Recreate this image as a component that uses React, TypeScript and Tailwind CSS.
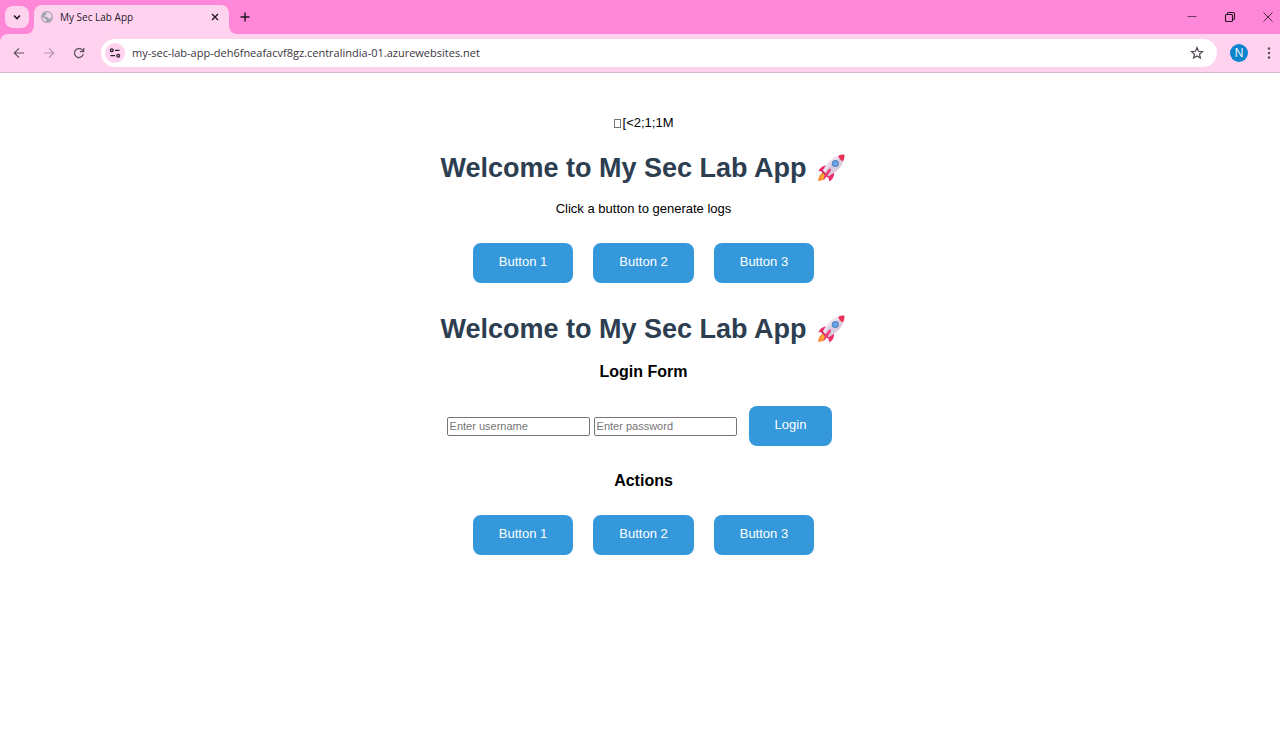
import React from "react";

function Rocket() {
  return (
    <svg role="img" aria-label="rocket" viewBox="0 0 32 32" className="h-8 w-8">
      <path d="M8 20.5c-2.4 1-4 3.5-5.2 8.500 4.500-.5 7.200-1.900 8.300-4.600z" fill="#f98a2f" />
      <path d="M8.600 22c-1.700 1-2.500 2.500-3 4.700 2.100-.2 3.600-.9 4.600-2.500z" fill="#ffb02e" />
      <path d="M12.500 13.500c-3.500-.3-6.900 1.300-9.200 5.400l5.800.5zM19 20.300c.4 3.500-.8 6.800-4.600 9.300l-1.700-6.100z" fill="#ec2d6c" />
      <path d="M24.500 3.600c-6.700 1-12.200 7.300-16.700 15.200l5.500 5.700c7.600-4.300 14-9.400 15.300-16.500z" fill="#dccbdc" />
      <path d="M24.500 3.600c-6.700 1-12.200 7.300-16.700 15.200l1.800 1.900c5-8 9.500-13.500 16.800-15.100z" fill="#ece2ef" />
      <path d="M23.200 3.900c2.400-1.200 4.700-1.500 6.200-1.200.3 1.600-.2 4.200-1.300 6.500-1.800-.4-4.200-2.700-4.900-5.300z" fill="#e93356" />
      <path d="M7.200 18.100l6.200 6.100-1 1.300-6.300-6.200z" fill="#c51b5c" />
      <path d="M14.800 16.300l1.400 1.400c-1.800 3.200-4.200 6.700-7.700 10.900.1-4.500 2.300-8.500 6.300-12.300z" fill="#ee3b78" />
      <circle cx="20.300" cy="11.600" r="3.500" fill="#4c88c9" />
      <circle cx="20.300" cy="11.600" r="2.300" fill="#70a6e2" />
    </svg>
  );
}

function Globe() {
  return (
    <svg viewBox="0 0 16 16" className="h-3 w-3 shrink-0" aria-hidden="true">
      <circle cx="8" cy="8" r="8" fill="#a3a3aa" />
      <path d="M8.500 1.500c-2.500.4-2.700 1.700-1.500 2.500 1.400.8-.4 1.700-1.700 1.700-.8.700-1.300 1.300-.4 1.900 1.600.3 2.900-.1 4 .8.900.9 1.100 2 2.500 2 1.500 0 2.200-1.300 3-2.400.2-3.400-2.300-6.300-5.900-6.500zM1.500 8c.8 1 2.600.9 3.200 1.900.8 1 2.400.4 2.600 1.600.1 1-.9 1.300-.8 2.800C3.600 13.700 1.400 11.200 1.500 8z" fill="#f0d5ea" />
    </svg>
  );
}

const iconButton = "flex h-6 w-6 shrink-0 items-center justify-center";

function TabStrip() {
  return (
    <div className="flex h-[34px] items-end bg-[#ff87d8]">
      <div className="flex h-[34px] w-[34px] shrink-0 items-center pl-[5px]">
        <button aria-label="Search tabs" className="flex h-[22px] w-6 items-center justify-center rounded-lg bg-[#ffd3f0]">
          <svg viewBox="0 0 12 12" className="h-3 w-3" fill="none" stroke="#201620" strokeWidth="1.6">
            <path d="M3 4.5 6 7.5 9 4.5" />
          </svg>
        </button>
      </div>
      <div className="relative flex h-[29px] w-[195px] items-center rounded-t-lg bg-[#ffd3f0] pb-1.5 pl-[7px] pr-2">
        <svg viewBox="0 0 8 8" className="absolute -left-2 bottom-0 h-2 w-2" aria-hidden="true">
          <path d="M8 0v8H0a8 8 0 0 0 8-8z" fill="#ffd3f0" />
        </svg>
        <svg viewBox="0 0 8 8" className="absolute -right-2 bottom-0 h-2 w-2" aria-hidden="true">
          <path d="M0 0v8h8a8 8 0 0 1-8-8z" fill="#ffd3f0" />
        </svg>
        <Globe />
        <span className="ml-[7px] flex-1 font-['Open_Sans',sans-serif] text-[10px] leading-4 text-[#25181f]">My Sec Lab App</span>
        <button aria-label="Close tab" className="flex h-3 w-3 items-center justify-center">
          <svg viewBox="0 0 12 12" className="h-3 w-3" stroke="#201620" strokeWidth="1.4">
            <path d="M3 3l6 6M9 3 3 9" />
          </svg>
        </button>
      </div>
      <button aria-label="New tab" className="ml-1 flex h-[34px] w-6 items-center justify-center">
        <svg viewBox="0 0 12 12" className="h-3 w-3" stroke="#201620" strokeWidth="1.4">
          <path d="M6 1.5v9M1.5 6h9" />
        </svg>
      </button>
      <div className="ml-auto flex h-[34px] items-center gap-[26px] pr-1.5">
        <button aria-label="Minimize" className="flex h-3 w-3 items-center justify-center">
          <svg viewBox="0 0 12 12" className="h-3 w-3" stroke="#6d3c5e" strokeWidth="1">
            <path d="M1.5 5.5h9" />
          </svg>
        </button>
        <button aria-label="Restore" className="flex h-3 w-3 items-center justify-center">
          <svg viewBox="0 0 12 12" className="h-3 w-3" fill="none" stroke="#2b1524" strokeWidth="1.1">
            <rect x="1.5" y="3.5" width="7" height="7" rx="1" />
            <path d="M3.5 3.500V2.600c0-.6.400-1.100 1-1.100h4.500c.8 0 1.500.6 1.500 1.500v4.500c0 .5-.4.900-1 .9h-.8" />
          </svg>
        </button>
        <button aria-label="Close window" className="flex h-3 w-3 items-center justify-center">
          <svg viewBox="0 0 12 12" className="h-3 w-3" stroke="#4d2a42" strokeWidth="1">
            <path d="M1.5 1.5l9 9M10.5 1.5l-9 9" />
          </svg>
        </button>
      </div>
    </div>
  );
}

function Toolbar() {
  return (
    <div className="bg-[#ff87d8]">
      <div className="flex h-[39px] items-center rounded-tl-lg border-b border-[#d3b9cf] bg-[#ffd3f0] pl-[7px]">
        <div className="flex gap-1.5">
          <button aria-label="Back" className={iconButton}>
            <svg viewBox="0 0 12 12" className="h-3 w-3" fill="none" stroke="#5d5060" strokeWidth="1.2">
              <path d="M11 6H1.5M6 1.3 1.3 6 6 10.7" />
            </svg>
          </button>
          <button aria-label="Forward" className={iconButton}>
            <svg viewBox="0 0 12 12" className="h-3 w-3" fill="none" stroke="#b494ad" strokeWidth="1.2">
              <path d="M1 6h9.5M6 1.3 10.7 6 6 10.7" />
            </svg>
          </button>
          <button aria-label="Reload" className={iconButton}>
            <svg viewBox="0 0 12 12" className="h-3 w-3" fill="none" stroke="#5d5060" strokeWidth="1.3">
              <path d="M10.3 7.2A4.500 4.500 0 1 1 9.200 2.900L10.600 4.400M10.700.9v3.700H7" />
            </svg>
          </button>
        </div>
        <div className="ml-2.5 flex h-7 flex-1 items-center rounded-full bg-white pl-1 pr-2">
          <button aria-label="View site information" className="flex h-5 w-5 shrink-0 items-center justify-center rounded-full bg-[#ffd3f0]">
            <svg viewBox="0 0 12 12" className="h-3 w-3" fill="none" stroke="#2a2029" strokeWidth="1.3">
              <circle cx="2.8" cy="3.3" r="1.4" />
              <path d="M6 3.3h4.500M1.500 8.700h4.500" />
              <circle cx="9.2" cy="8.7" r="1.4" />
            </svg>
          </button>
          <input
            aria-label="Address"
            defaultValue="my-sec-lab-app-deh6fneafacvf8gz.centralindia-01.azurewebsites.net"
            className="ml-[7px] min-w-0 flex-1 bg-transparent font-['Open_Sans',sans-serif] text-[11px] leading-5 text-[#3b3640] outline-none"
          />
          <button aria-label="Bookmark this page" className={iconButton}>
            <svg viewBox="0 0 14 14" className="h-3.5 w-3.5" fill="none" stroke="#4f4652" strokeWidth="1.2">
              <path d="M7 1.600 8.500 5.300l4 .3-3 2.600.9 3.900L7 10l-3.400 2.100.9-3.900-3-2.600 4-.3z" />
            </svg>
          </button>
        </div>
        <button
          aria-label="Profile"
          className="ml-[13px] flex h-[18px] w-[18px] items-center justify-center rounded-full bg-[#0d84cc] font-['Open_Sans',sans-serif] text-[12px] leading-4 text-white"
        >
          N
        </button>
        <button aria-label="Menu" className="ml-2.5 flex h-6 w-[22px] items-center justify-center">
          <svg viewBox="0 0 12 12" className="h-3 w-3" fill="#574b59">
            <circle cx="6" cy="1.5" r="1.2" />
            <circle cx="6" cy="6" r="1.2" />
            <circle cx="6" cy="10.5" r="1.2" />
          </svg>
        </button>
      </div>
    </div>
  );
}

function ActionButton({ children }: { children: React.ReactNode }) {
  return (
    <button className="h-10 rounded-lg bg-[#3498db] px-[26px] pb-0.5 text-[13px] leading-5 text-white">{children}</button>
  );
}

function ButtonRow() {
  return (
    <div className="flex gap-5">
      <ActionButton>Button 1</ActionButton>
      <ActionButton>Button 2</ActionButton>
      <ActionButton>Button 3</ActionButton>
    </div>
  );
}

function Heading() {
  return (
    <h1 className="flex h-8 items-center gap-2 text-[27px] font-bold leading-8 text-[#2c3e50]">
      <span>Welcome to My Sec Lab App</span>
      <Rocket />
    </h1>
  );
}

const field =
  "h-[19px] w-[143px] rounded-[2px] border border-[#767676] bg-white px-0.5 text-[11px] leading-4 text-black outline-none placeholder:text-[#757575]";

export default function App() {
  return (
    <div className="min-h-screen bg-white font-['Liberation_Sans',Arial,sans-serif] text-black">
      <header>
        <TabStrip />
        <Toolbar />
      </header>
      <main className="flex flex-col items-center pl-[7px] pt-10 text-[13px] leading-5">
        <p className="flex items-center">
          <span className="mr-0.5 h-[9px] w-[7px] border border-[#777]" />
          [&lt;2;1;1M
        </p>
        <div className="mt-[19px]">
          <Heading />
        </div>
        <p className="mb-6 mt-[15px]">Click a button to generate logs</p>
        <ButtonRow />
        <div className="mt-[30px]">
          <Heading />
        </div>
        <h3 className="mt-[17px] text-[16px] font-bold leading-5">Login Form</h3>
        <form className="mt-6 flex items-center" onSubmit={(e) => e.preventDefault()}>
          <input aria-label="Username" placeholder="Enter username" className={field} />
          <input aria-label="Password" type="password" placeholder="Enter password" className={`${field} ml-1`} />
          <div className="ml-3 mr-2">
            <ActionButton>Login</ActionButton>
          </div>
        </form>
        <h3 className="mb-6 mt-[25px] text-[16px] font-bold leading-5">Actions</h3>
        <ButtonRow />
      </main>
    </div>
  );
}
